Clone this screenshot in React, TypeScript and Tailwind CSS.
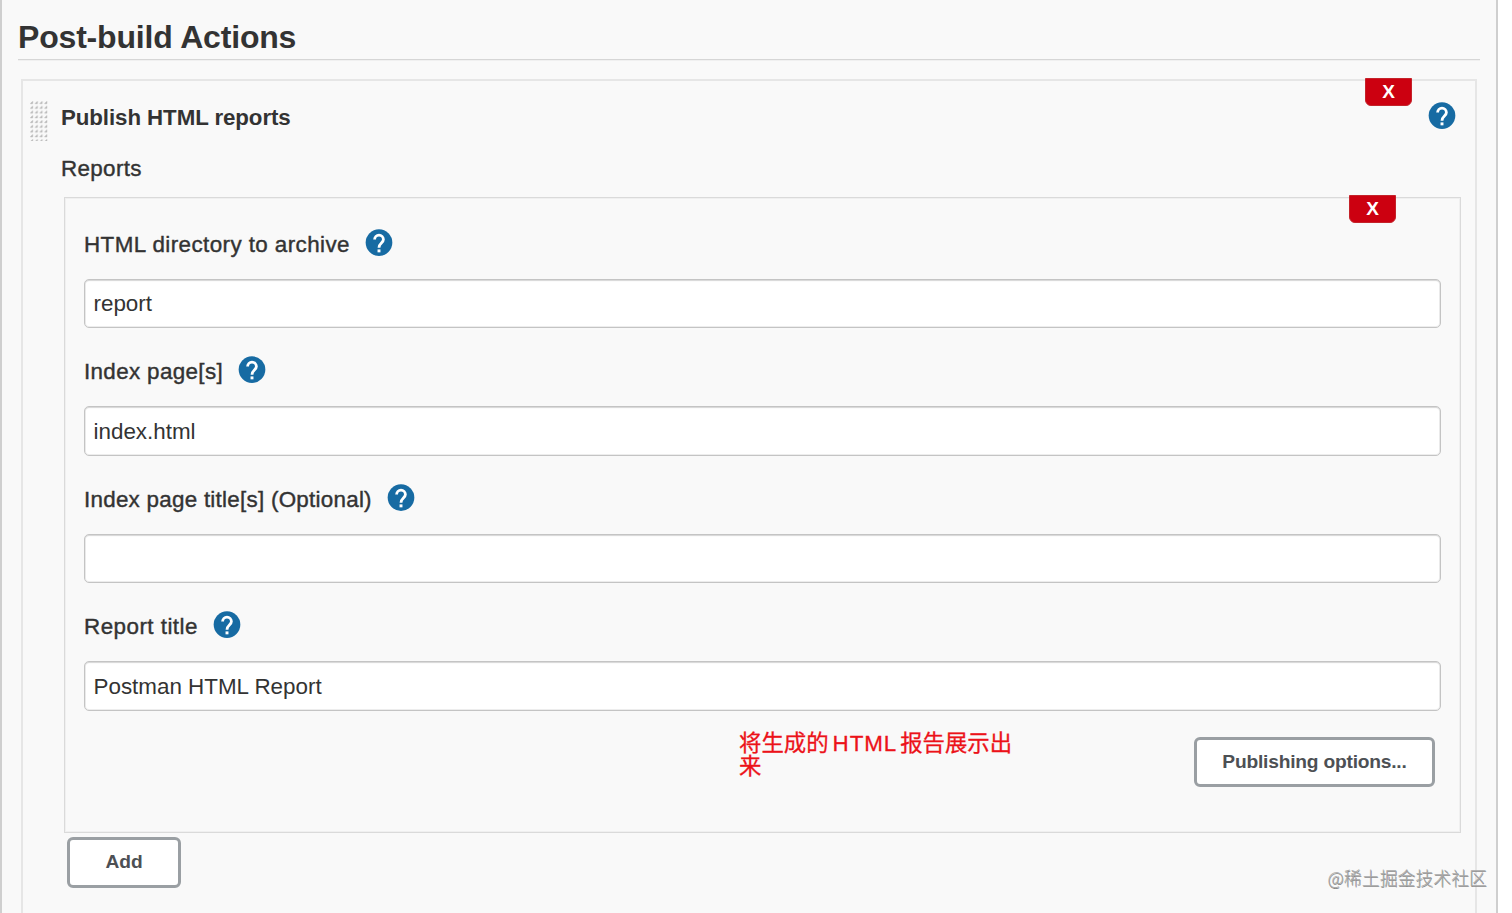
const fields = [
  {
    label: 'HTML directory to archive',
    value: 'report',
    box: 'h-[49px]',
    tracking: 'tracking-[0.42px]',
  },
  {
    label: 'Index page[s]',
    value: 'index.html',
    box: 'h-[50px] pt-px',
    tracking: 'tracking-[0.35px]',
  },
  {
    label: 'Index page title[s] (Optional)',
    value: '',
    box: 'h-[49px]',
    tracking: 'tracking-[0.26px]',
  },
  {
    label: 'Report title',
    value: 'Postman HTML Report',
    box: 'h-[50px] pt-px',
    tracking: 'tracking-[0.47px]',
  },
]

function HelpIcon() {
  return (
    <svg width="32" height="32" viewBox="0 0 24 24" fill="none" className="shrink-0">
      <circle cx="12" cy="11.7" r="10" fill="#176ba3" />
      <path
        d="M8.7 9.4a3.3 3.3 0 0 1 6.6 0c0 2.5-3.3 2.9-3.3 6.1"
        stroke="#fff"
        strokeWidth="2.1"
      />
      <rect x="10.9" y="16.8" width="2.2" height="2.2" fill="#fff" />
    </svg>
  )
}

function DeleteButton({ className }: { className: string }) {
  return (
    <button
      className={`absolute flex h-[28px] w-[47px] items-center justify-center rounded-b-[6px] border border-[#c4232a] bg-[#cc0010] pb-[2px] text-[19px] font-bold leading-none text-white ${className}`}
    >
      X
    </button>
  )
}

function DragHandle() {
  return (
    <svg width="18" height="40" className="shrink-0">
      <defs>
        <pattern id="dots" width="4.75" height="4.75" patternUnits="userSpaceOnUse">
          <path d="M0.4 2.6L2.6 0.4V2.6Z" fill="#a3a3a3" stroke="#b5b5b5" strokeWidth="0.6" />
        </pattern>
      </defs>
      <rect width="18" height="40" fill="url(#dots)" />
    </svg>
  )
}

export default function App() {
  return (
    <div className="h-[913px] w-full overflow-hidden bg-white font-['Liberation_Sans',Arial,sans-serif] text-[#333]">
      <div className="relative h-full w-[1498px] border-x-2 border-[#cfcfcf] bg-[#f9f9f9] px-4">
        <h1 className="h-[60px] border-b border-[#d6d6d6] pt-[19px] text-[32px] font-bold leading-[37px] tracking-[-0.18px] shadow-[0_1px_0_#f0f0f0]">
          Post-build Actions
        </h1>

        {/* Publisher block */}
        <section className="relative mx-[3px] mt-[19px] h-[860px] border-2 border-[#e6e6e6]">
          <DeleteButton className="right-[63px] top-[-3px]" />
          <div className="flex h-[62px] items-start pl-[7px] pr-[17px] pt-[20px]">
            <DragHandle />
            <h2 className="ml-[13px] mt-[4px] flex-1 text-[22.3px] font-bold leading-[26px] tracking-[-0.08px]">
              Publish HTML reports
            </h2>
            <div className="-mt-px">
              <HelpIcon />
            </div>
          </div>
          <div className="ml-[38px] mt-[13px] text-[22.4px] leading-[26px] tracking-[0.35px] [-webkit-text-stroke:0.4px_#333]">
            Reports
          </div>

          {/* Report target */}
          <div className="relative ml-[41px] mr-[14px] mt-[15px] h-[636px] border border-[#dadada] px-[19px] shadow-[inset_0_0_0_1px_#f0f0f0]">
            <DeleteButton className="right-[64px] top-[-3px]" />
            <div className="pt-[3px]">
              {fields.map((field) => (
                <div key={field.label}>
                  <div className="flex h-[78px] items-start gap-[13px] pt-[26px]">
                    <label
                      className={`mt-[5px] text-[22.4px] leading-[26px] [-webkit-text-stroke:0.4px_#333] ${field.tracking}`}
                    >
                      {field.label}
                    </label>
                    <HelpIcon />
                  </div>
                  <input
                    readOnly
                    defaultValue={field.value}
                    className={`block w-full rounded-[5px] border border-[#c4c4c4] bg-white px-[8.5px] text-[22.4px] shadow-[inset_0_1px_1px_#d8d8d8,inset_0_0_0_1px_#ededed] outline-none ${field.box}`}
                  />
                </div>
              ))}
            </div>
            <div className="flex justify-end pr-[6px] pt-[26px]">
              <button className="h-[50px] w-[241px] rounded-[6px] border-3 border-[#9a9fa3] bg-white text-[19.2px] font-bold tracking-[-0.21px] text-[#4d5054]">
                Publishing options...
              </button>
            </div>
            <p className="absolute left-[674px] top-[534px] w-[290px] font-['Liberation_Sans','Noto_Sans_CJK_SC',sans-serif] text-[22.4px] leading-[23px] text-[#ec1219] [-webkit-text-stroke:0.3px_#ec1219]">
              将生成的<span className="ml-[4px] mr-[3px] tracking-[0.9px]">HTML</span>报告展示出
              <br />来
            </p>
          </div>

          <button className="ml-[44px] mt-[4px] block h-[51px] w-[114px] rounded-[6px] border-3 border-[#9a9fa3] bg-white text-[19.2px] font-bold tracking-[-0.1px] text-[#4d5054]">
            Add
          </button>
        </section>

        <div className="absolute right-[9px] top-[864px] whitespace-nowrap font-['Noto_Sans_CJK_SC',sans-serif] text-[17.9px] font-light leading-[26px] text-[#a8a8a8] [text-shadow:0.5px_0.5px_0.5px_#888]">
          @稀土掘金技术社区
        </div>
      </div>
    </div>
  )
}
